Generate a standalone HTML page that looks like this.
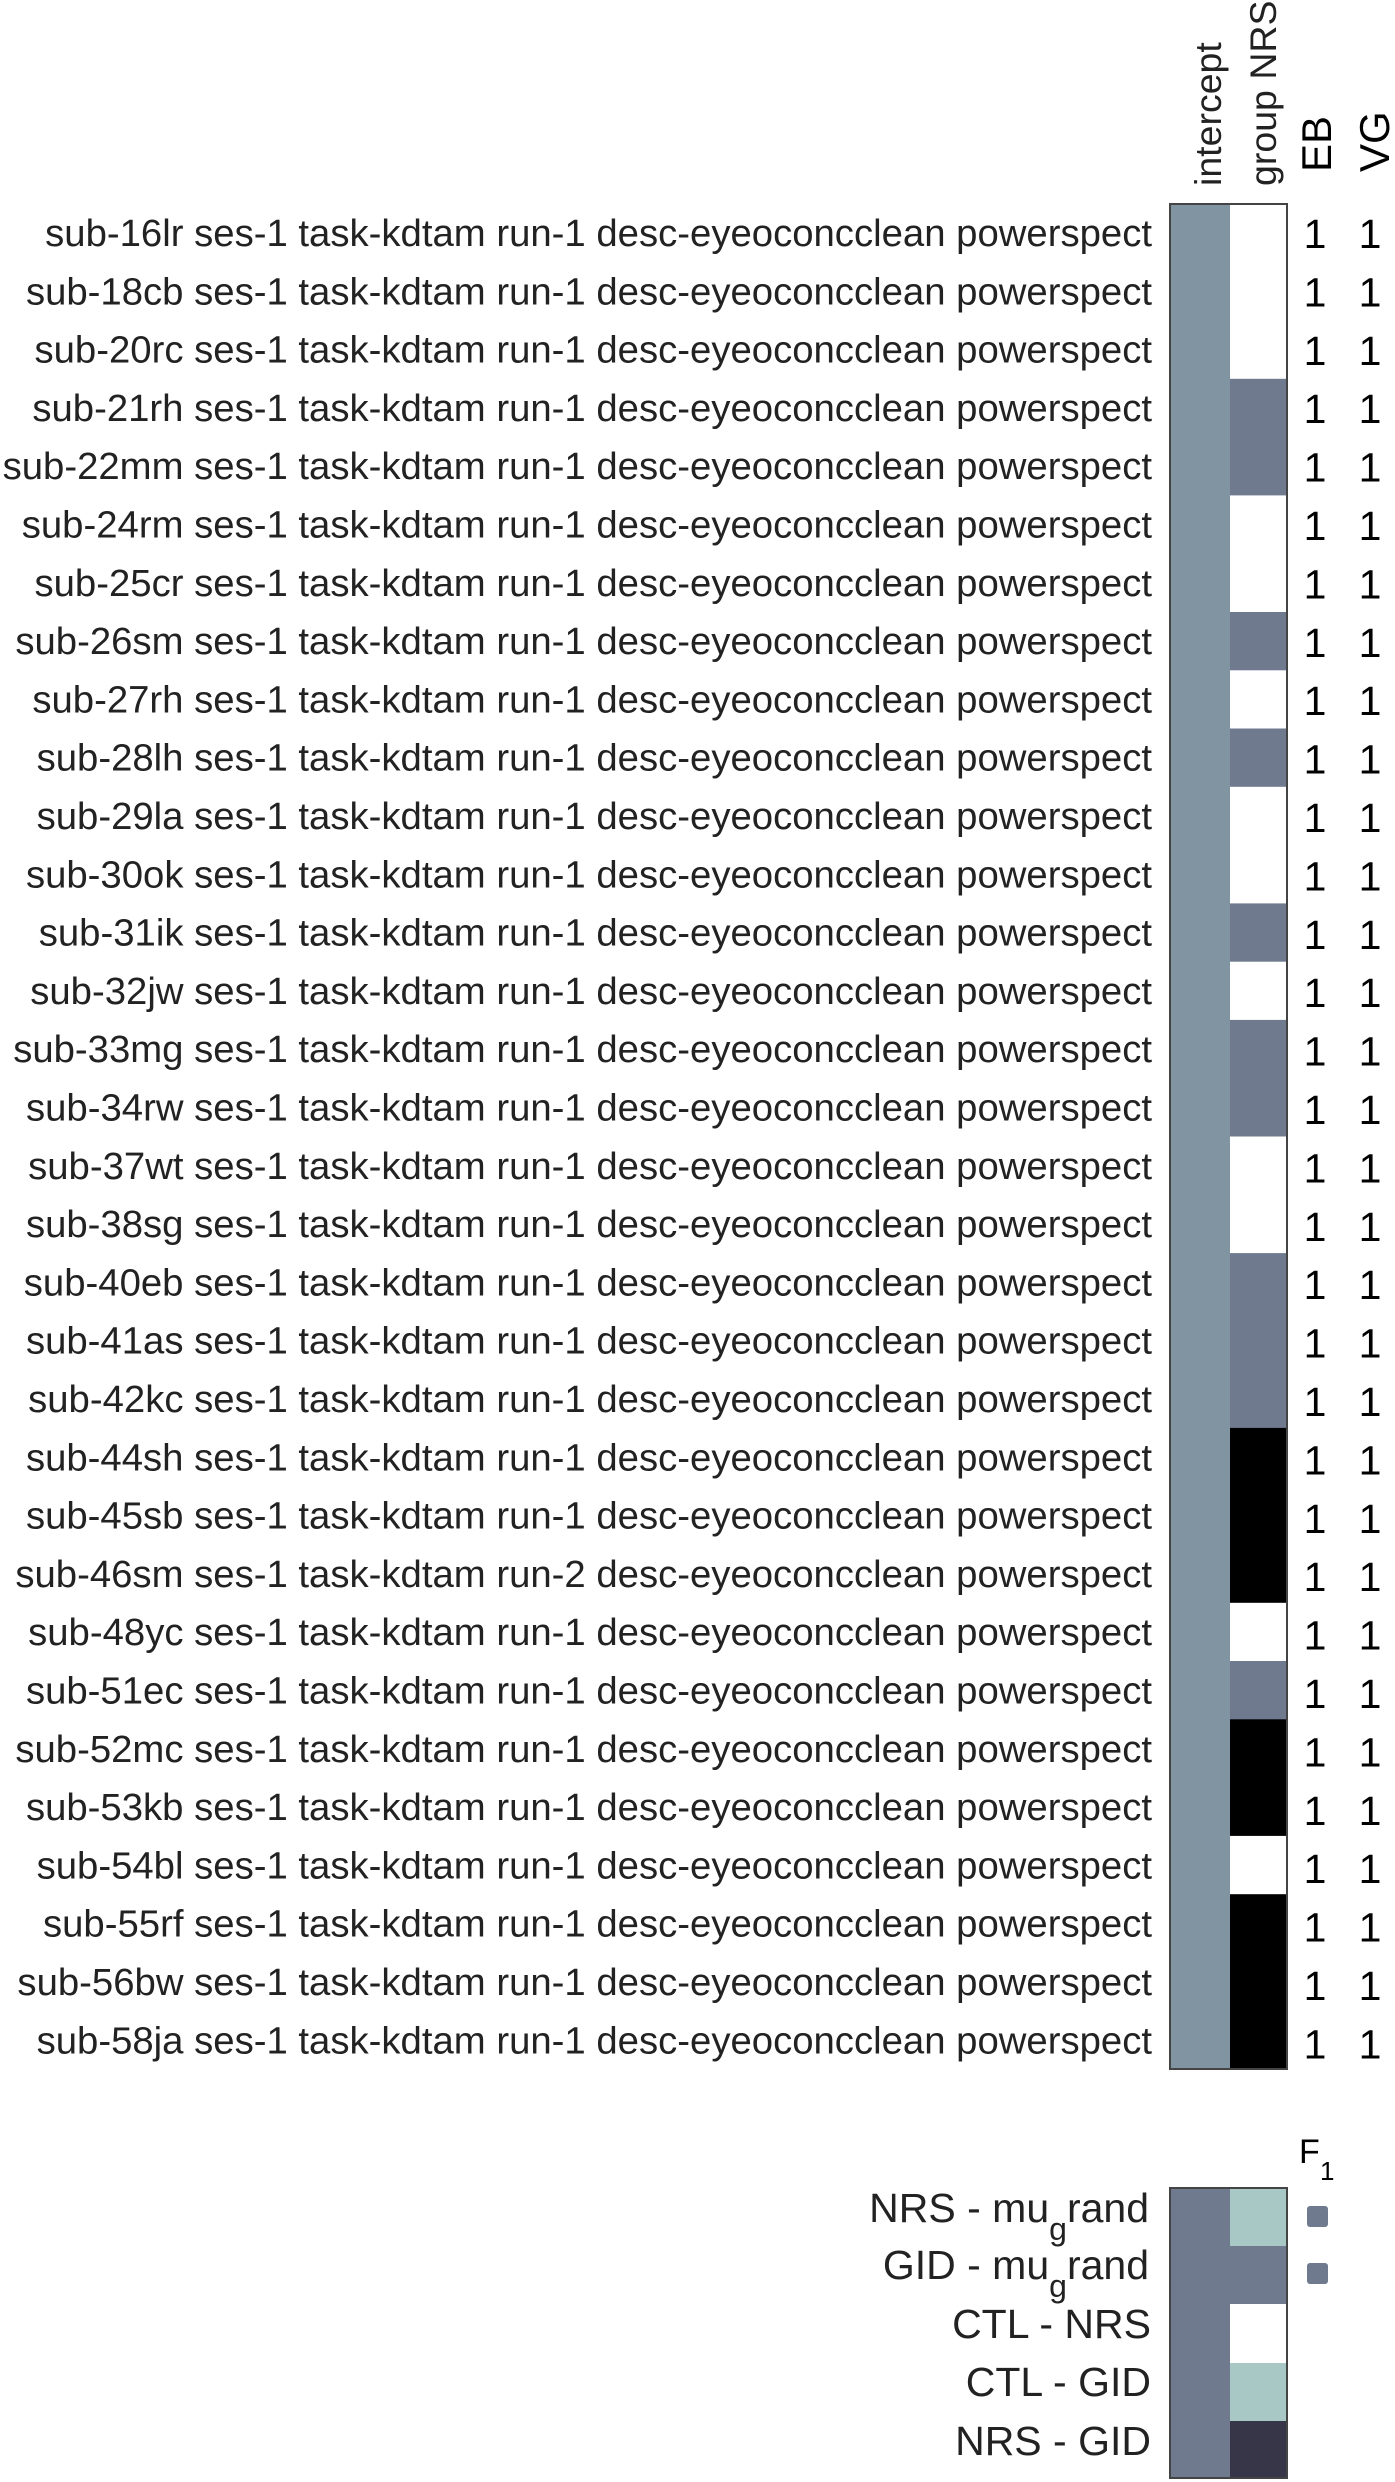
<!DOCTYPE html>
<html><head><meta charset="utf-8"><style>
html,body{margin:0;padding:0;background:#fff;}
svg{display:block;}
text{font-family:"Liberation Sans",Arial,sans-serif;}
</style></head><body>
<svg width="1395" height="2482" viewBox="0 0 1395 2482" xmlns="http://www.w3.org/2000/svg">
<g fill="#222" font-size="37.5">
<text transform="translate(1221,186) rotate(-90)">intercept</text>
<text transform="translate(1276,186) rotate(-90)">group NRS</text>
<text transform="translate(1331,172) rotate(-90)" fill="#000" font-size="42">EB</text>
<text transform="translate(1389,172) rotate(-90)" fill="#000" font-size="42">VG</text>
</g>
<rect x="1170" y="204" width="60" height="1865" fill="#8194a1"/>
<g id="nrs"></g>
<rect x="1170" y="204" width="117" height="1865" fill="none" stroke="#444" stroke-width="2"/>
<g id="labels" fill="#222" font-size="38.3" text-anchor="end"></g>
<g id="ones" fill="#000" font-size="41" text-anchor="middle"></g>

<text x="1299" y="2163" font-size="34" fill="#000">F</text>
<text x="1320" y="2180" font-size="26" fill="#000">1</text>
<rect x="1307" y="2206" width="21" height="21" rx="3" fill="#6f7a8f"/>
<rect x="1307" y="2263" width="21" height="21" rx="3" fill="#6f7a8f"/>

<rect x="1170" y="2188" width="60" height="290" fill="#6f7a8f"/>
<rect x="1230" y="2188" width="57" height="58" fill="#a8c8c6"/>
<rect x="1230" y="2246" width="57" height="58" fill="#6f7a8f"/>
<rect x="1230" y="2304" width="57" height="59" fill="#ffffff"/>
<rect x="1230" y="2363" width="57" height="58" fill="#a8c8c6"/>
<rect x="1230" y="2421" width="57" height="57" fill="#363648"/>
<rect x="1170" y="2188" width="117" height="290" fill="none" stroke="#444" stroke-width="2"/>
<g fill="#222" font-size="41" text-anchor="end">
<text x="1149" y="2222">NRS - mu<tspan font-size="32" dy="18">g</tspan><tspan dy="-18">rand</tspan></text>
<text x="1149" y="2279">GID - mu<tspan font-size="32" dy="18">g</tspan><tspan dy="-18">rand</tspan></text>
<text x="1151" y="2338">CTL - NRS</text>
<text x="1151" y="2396">CTL - GID</text>
<text x="1151" y="2455">NRS - GID</text>
</g>
</svg>
<script>
var subs=["16lr","18cb","20rc","21rh","22mm","24rm","25cr","26sm","27rh","28lh","29la","30ok","31ik","32jw","33mg","34rw","37wt","38sg","40eb","41as","42kc","44sh","45sb","46sm","48yc","51ec","52mc","53kb","54bl","55rf","56bw","58ja"];
var pat="WWWSSWWSWSWWSWSSWWSSSBBBWSBBWBBB";
var col={W:"#ffffff",S:"#6f7a8f",B:"#000000"};
var ns="http://www.w3.org/2000/svg";
var g=document.getElementById("nrs"),L=document.getElementById("labels"),O=document.getElementById("ones");
var rh=1865/32;
for(var i=0;i<32;i++){
 var r=document.createElementNS(ns,"rect");
 var y0=204+i*rh;
 r.setAttribute("x",1230);r.setAttribute("y",y0.toFixed(1));r.setAttribute("width",57);r.setAttribute("height",(rh+0.6).toFixed(1));
 r.setAttribute("fill",col[pat[i]]);g.appendChild(r);
 var t=document.createElementNS(ns,"text");
 t.setAttribute("x",1152);t.setAttribute("y",(246+i*58.3).toFixed(1));
 t.textContent="sub-"+subs[i]+" ses-1 task-kdtam run-"+(subs[i]=="46sm"?"2":"1")+" desc-eyeoconcclean powerspect";
 L.appendChild(t);
 [1315,1370].forEach(function(x){
  var o=document.createElementNS(ns,"text");
  o.setAttribute("x",x);o.setAttribute("y",(248+i*58.4).toFixed(1));o.textContent="1";O.appendChild(o);
 });
}
</script>
</body></html>
